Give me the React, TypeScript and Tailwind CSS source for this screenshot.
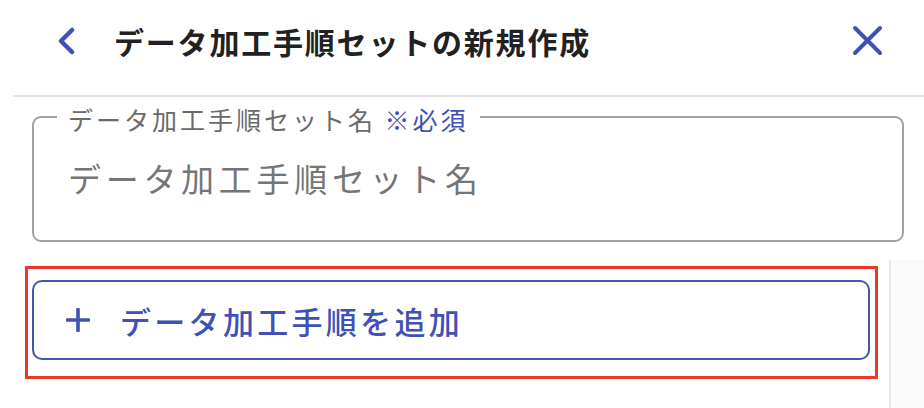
import React from 'react';

const INDIGO = '#3f51b5';

function BackIcon() {
  return (
    <svg width="20" height="28" viewBox="0 0 20 28" fill="none">
      <polyline points="16,3 5,14 16,25" stroke={INDIGO} strokeWidth="4.5" strokeLinecap="round" strokeLinejoin="round" />
    </svg>
  );
}

function CloseIcon() {
  return (
    <svg width="33" height="33" viewBox="0 0 33 33" fill="none">
      <path d="M4 4 L29 29 M29 4 L4 29" stroke={INDIGO} strokeWidth="4" strokeLinecap="round" />
    </svg>
  );
}

function PlusIcon() {
  return (
    <svg width="24" height="24" viewBox="0 0 24 24" fill="none">
      <path d="M12 1.5 V22.5 M1.5 12 H22.5" stroke={INDIGO} strokeWidth="3.6" strokeLinecap="round" />
    </svg>
  );
}

export default function App() {
  return (
    <div className="w-[924px] h-[408px] overflow-hidden bg-white font-['Noto_Sans_CJK_JP','Noto_Sans',sans-serif]">
      {/* header */}
      <div className="flex h-[82px] items-center pl-[56px] pr-[40px]">
        <BackIcon />
        <h1 className="ml-[38px] text-[30px] font-bold leading-none tracking-[1.8px] text-[#212121]">データ加工手順セットの新規作成</h1>
        <button className="ml-auto -mt-[2px]" title="閉じる">
          <CloseIcon />
        </button>
      </div>
      <div className="ml-[13px] mt-[13px] h-[2px] bg-[#e4e4e4]" />

      {/* name field */}
      <div className="pl-[32px] pr-[20px] pt-[19px]">
        <div className="relative flex h-[126px] items-center rounded-[9px] border-2 border-[#a2a2a2]">
          <span className="absolute left-[23px] top-[-11px] bg-white px-[11px] text-[25px] leading-[25px] tracking-[3px] text-[#6a6a6a]">
            データ加工手順セット名 <span style={{ color: INDIGO }}>※必須</span>
          </span>
          <input
            className="w-full bg-transparent pl-[34px] text-[33px] tracking-[4.7px] text-[#212121] outline-none placeholder:text-[#757575]"
            placeholder="データ加工手順セット名"
          />
        </div>
      </div>

      {/* add step */}
      <div className="mt-[18px] flex items-start">
        <div className="ml-[25px] mt-[6px] w-[853px] border-[3px] border-[#e8392b] pb-[16px] pl-[4px] pr-[5px] pt-[11px]">
          <button className="flex h-[80px] w-full items-center rounded-[10px] border-2 border-[#4455b8] pl-[32px] text-[#3f51b5]">
            <PlusIcon />
            <span className="ml-[30px] text-[31px] font-medium leading-none tracking-[3.3px]">データ加工手順を追加</span>
          </button>
        </div>
        <div className="ml-auto h-[148px] w-[35px] border-l-2 border-[#e8e8e8] bg-[#fafafa]" />
      </div>
    </div>
  );
}
